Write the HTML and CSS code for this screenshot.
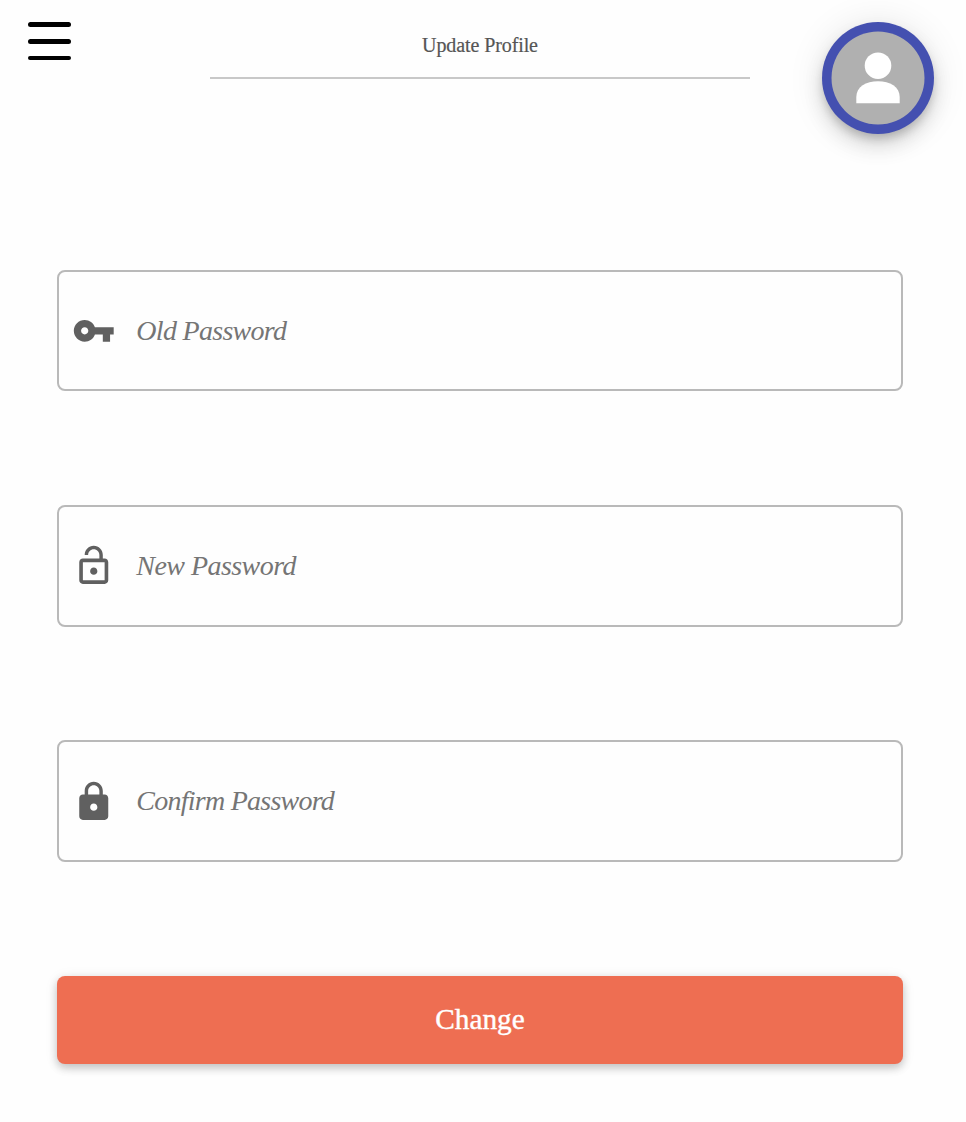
FILE: index.html
```html
<!DOCTYPE html>
<html lang="en">
<head>
<meta charset="utf-8">
<title>Update Profile</title>
<link rel="stylesheet" href="styles.css">
</head>
<body>
<header class="header">
  <button class="menu" aria-label="Menu">
    <svg width="43" height="38" viewBox="0 0 43 38"><rect width="43" height="5" rx="2.5"/><rect y="17" width="43" height="5" rx="2.5"/><rect y="34" width="43" height="4" rx="2"/></svg>
  </button>
  <h1 class="title">Update Profile</h1>
  <div class="avatar">
    <svg width="94" height="94" viewBox="0 0 94 94"><circle cx="47" cy="47" r="46.5" fill="#b0b0b0"/><circle cx="47" cy="34.700" r="13.3" fill="#fff"/><path d="M25.300 72.300V66C25.300 56 35 50.300 47 50.300S68.700 56 68.700 66v6.300z" fill="#fff"/></svg>
  </div>
</header>
<form class="form">
  <label class="field">
    <svg class="icon" viewBox="0 0 24 24"><path d="M12.650 10C11.830 7.670 9.610 6 7 6c-3.310 0-6 2.690-6 6s2.690 6 6 6c2.610 0 4.830-1.670 5.650-4H17v4h4v-4h2v-4H12.650zM7 14c-1.100 0-2-.9-2-2s.9-2 2-2 2 .9 2 2-.9 2-2 2z"/></svg>
    <span class="placeholder old">Old Password</span>
  </label>
  <label class="field tall">
    <svg class="icon" viewBox="0 0 24 24"><path d="M12 17c1.100 0 2-.9 2-2s-.9-2-2-2-2 .9-2 2 .9 2 2 2zm6-9h-1V6c0-2.760-2.240-5-5-5S7 3.240 7 6h1.900c0-1.710 1.390-3.100 3.100-3.100s3.100 1.390 3.100 3.100v2H6c-1.100 0-2 .9-2 2v10c0 1.100.9 2 2 2h12c1.100 0 2-.9 2-2V10c0-1.100-.9-2-2-2zm0 12H6V10h12v10z"/></svg>
    <span class="placeholder new">New Password</span>
  </label>
  <label class="field tall">
    <svg class="icon locked" viewBox="0 0 24 24"><path d="M18 8h-1V6c0-2.760-2.240-5-5-5S7 3.240 7 6v2H6c-1.100 0-2 .9-2 2v10c0 1.100.9 2 2 2h12c1.100 0 2-.9 2-2V10c0-1.100-.9-2-2-2zm-6 9c-1.100 0-2-.9-2-2s.9-2 2-2 2 .9 2 2-.9 2-2 2zm3.100-9H8.900V6c0-1.710 1.390-3.100 3.100-3.100s3.100 1.390 3.100 3.100v2z"/></svg>
    <span class="placeholder confirm">Confirm Password</span>
  </label>
  <button class="submit" type="button">Change</button>
</form>
</body>
</html>
```

FILE: styles.css
```css
* { box-sizing: border-box; }
body {
  min-height: 100vh;
  margin: 0;
  background: #fefefe;
  font-family: "Liberation Serif", "Times New Roman", serif;
}
.header {
  display: flex;
  justify-content: space-between;
  align-items: flex-start;
  height: 270px;
  padding: 22px 32px 0 28px;
}
.menu {
  display: flex;
  width: 112px;
  padding: 0;
  border: 0;
  background: none;
}
.title {
  width: 540px;
  height: 57px;
  margin: 0 2px 0 0;
  padding-top: 12px;
  border-bottom: 2px solid #c8c8c8;
  color: #555;
  font-size: 20px;
  font-weight: 400;
  letter-spacing: -.1px;
  line-height: 23px;
  text-align: center;
  -webkit-text-stroke: .2px;
}
.avatar {
  display: flex;
  align-items: center;
  justify-content: center;
  width: 112px;
  height: 112px;
  border-radius: 50%;
  background: #4450b0;
  box-shadow: 0 6px 10px -2px rgba(0,0,0,.2), 0 12px 20px rgba(0,0,0,.12), 0 2px 36px rgba(0,0,0,.1);
}
.form {
  display: flex;
  flex-direction: column;
  padding: 0 63px 58px 57px;
}
.field {
  display: flex;
  align-items: center;
  gap: 20.500px;
  height: 121px;
  margin-bottom: 114px;
  padding-left: 13.300px;
  border: 2px solid #b9b9b9;
  border-radius: 8px;
}
.tall {
  height: 122px;
  margin-bottom: 113px;
}
.icon {
  width: 43.500px;
  height: 43.500px;
  fill: #606060;
}
.locked { margin-top: 1px; }
.placeholder {
  color: #757575;
  font-family: "Apple Chancery", "Liberation Serif", serif;
  font-size: 28px;
  font-style: italic;
  line-height: 32px;
}
.old { letter-spacing: -.7px; }
.new { letter-spacing: -.55px; }
.confirm { letter-spacing: -.75px; }
.submit {
  height: 88px;
  margin-top: 1px;
  padding: 0 0 1px;
  border: 0;
  border-radius: 8px;
  background: #ee6e52;
  box-shadow: 0 4px 8px rgba(0,0,0,.2), 0 2px 14px rgba(0,0,0,.08);
  color: #fff;
  font: 29.300px "Liberation Serif", serif;
  -webkit-text-stroke: .4px;
}
```
